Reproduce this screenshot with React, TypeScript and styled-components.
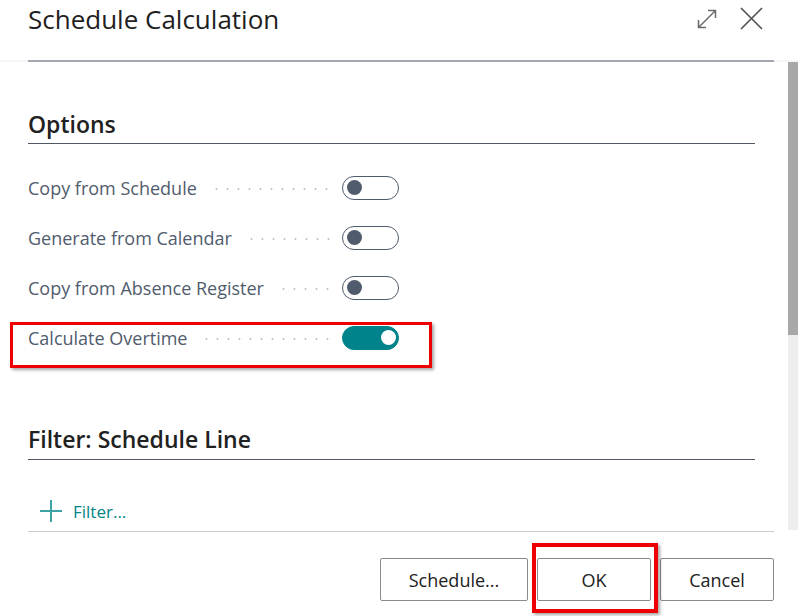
import React from "react";
import styled, { createGlobalStyle } from "styled-components";

const GlobalStyle = createGlobalStyle`
  html, body {
    margin: 0;
    padding: 0;
    background: #ffffff;
  }
  body {
    font-family: "Open Sans", "Noto Sans", sans-serif;
    color: #212121;
  }
`;

const options = [
  { label: "Copy from Schedule", on: false },
  { label: "Generate from Calendar", on: false },
  { label: "Copy from Absence Register", on: false },
  { label: "Calculate Overtime", on: true, marked: true },
];

const App = () => {
  return (
    <Dialog>
      <GlobalStyle />
      <HeaderBar>
        <Header>
          <Title>Schedule Calculation</Title>
          <HeaderIcons>
            <IconButton aria-label="Expand">
              <svg width="22" height="22" viewBox="0 0 22 22" fill="none">
                <path
                  d="M2.5 19.5 L19.5 2.5 M12 2.5 H19.5 V10 M2.5 12 V19.5 H10"
                  stroke="#6b6b6b"
                  strokeWidth="1.5"
                />
              </svg>
            </IconButton>
            <IconButton aria-label="Close">
              <svg width="23" height="23" viewBox="0 0 23 23" fill="none">
                <path d="M1 1 L22 22 M22 1 L1 22" stroke="#555555" strokeWidth="1.7" />
              </svg>
            </IconButton>
          </HeaderIcons>
        </Header>
      </HeaderBar>

      <Body>
        <Content>
          <Section>
            <SectionTitle>Options</SectionTitle>
            {options.map((opt) => (
              <FieldRow key={opt.label}>
                <FieldLabel>{opt.label}</FieldLabel>
                <Leader />
                <Toggle $on={opt.on}>
                  <Knob $on={opt.on} />
                </Toggle>
                {opt.marked && <RowMark />}
              </FieldRow>
            ))}
          </Section>

          <FilterSection>
            <SectionTitle>Filter: Schedule Line</SectionTitle>
            <FilterLink>
              <svg width="22" height="22" viewBox="0 0 22 22" fill="none">
                <path d="M0 11 H22 M11 0 V22" stroke="#3ea2a6" strokeWidth="2" />
              </svg>
              <span>Filter...</span>
            </FilterLink>
          </FilterSection>
        </Content>
        <ScrollTrack>
          <ScrollThumb />
        </ScrollTrack>
      </Body>

      <Footer>
        <ActionButton $wide>Schedule...</ActionButton>
        <Marked>
          <ActionButton>OK</ActionButton>
          <ButtonMark />
        </Marked>
        <ActionButton>Cancel</ActionButton>
      </Footer>
    </Dialog>
  );
};

export default App;

const Dialog = styled.div`
  width: 798px;
  height: 616px;
  display: flex;
  flex-direction: column;
  overflow: hidden;
  background: #ffffff;
`;

const HeaderBar = styled.div`
  border-bottom: 2px solid #f5f5f6;
  padding: 0 24px 0 28px;
`;

const Header = styled.div`
  height: 60px;
  display: flex;
  align-items: flex-start;
  justify-content: space-between;
  border-bottom: 2px solid #a3a7b2;
  margin-bottom: -2px;
`;

const Title = styled.h1`
  margin: 0;
  font-size: 26px;
  line-height: 38px;
  font-weight: 400;
  color: #1f1f1f;
`;

const HeaderIcons = styled.div`
  display: flex;
  align-items: center;
  gap: 22px;
  margin-top: 7px;
  margin-right: 11px;
`;

const IconButton = styled.span`
  display: flex;
  line-height: 0;
`;

const Body = styled.div`
  display: flex;
  height: 470px;
`;

const Content = styled.div`
  flex: 1;
  margin-left: 28px;
  border-bottom: 1px solid #cccccc;
  padding-right: 19px;
`;

const Section = styled.div`
  padding-top: 47px;
`;

const SectionTitle = styled.h2`
  margin: 0;
  font-size: 23px;
  line-height: 30px;
  font-weight: 600;
  color: #212121;
  padding-bottom: 4px;
  border-bottom: 1px solid #505868;
  margin-bottom: 19px;
`;

const FieldRow = styled.div`
  position: relative;
  height: 50px;
  width: 371px;
  display: flex;
  align-items: center;
`;

const FieldLabel = styled.span`
  font-size: 18px;
  color: #505c6d;
  white-space: nowrap;
`;

const Leader = styled.span`
  flex: 1;
  height: 2px;
  margin: 2px 10px 0 14px;
  background-image: radial-gradient(circle, #bfc3ca 0.9px, transparent 1.2px);
  background-size: 11px 2px;
  background-repeat: repeat-x;
`;

const Toggle = styled.span<{ $on: boolean }>`
  position: relative;
  flex: none;
  box-sizing: border-box;
  width: 57px;
  height: 24px;
  border-radius: 12px;
  border: 1px solid ${(p) => (p.$on ? "#00838a" : "#505c6d")};
  background: ${(p) => (p.$on ? "#00838a" : "#ffffff")};
`;

const Knob = styled.span<{ $on: boolean }>`
  position: absolute;
  top: 3px;
  left: ${(p) => (p.$on ? "38px" : "4px")};
  width: 15px;
  height: 15px;
  border-radius: 50%;
  background: ${(p) => (p.$on ? "#ffffff" : "#505c6d")};
`;

const RowMark = styled.span`
  position: absolute;
  left: -18px;
  top: 9px;
  width: 422px;
  height: 46px;
  box-sizing: border-box;
  border: 3px solid #ee0000;
  box-shadow: 2px 2px 3px rgba(0, 0, 0, 0.35);
  pointer-events: none;
`;

const FilterSection = styled.div`
  padding-top: 61px;

  ${SectionTitle} {
    padding-bottom: 5px;
    margin-bottom: 39px;
  }
`;

const FilterLink = styled.div`
  display: flex;
  align-items: center;
  gap: 11px;
  padding-left: 12px;
  height: 24px;
  font-size: 17px;
  color: #00858a;
`;

const ScrollTrack = styled.div`
  width: 10px;
  margin-left: 14px;
  height: 468px;
  background: #eeeeee;
`;

const ScrollThumb = styled.div`
  height: 273px;
  background: #a8a8a8;
`;

const Footer = styled.div`
  display: flex;
  justify-content: flex-end;
  gap: 9px;
  padding: 26px 24px 0 0;
`;

const Marked = styled.div`
  position: relative;
  display: flex;
`;

const ActionButton = styled.button<{ $wide?: boolean }>`
  box-sizing: border-box;
  width: ${(p) => (p.$wide ? "148px" : "114px")};
  height: 43px;
  background: #ffffff;
  border: 1px solid #8a8a8a;
  border-radius: 2px;
  font-family: "Open Sans", "Noto Sans", sans-serif;
  font-size: 18px;
  font-weight: 500;
  color: #212121;
  cursor: pointer;
`;

const ButtonMark = styled.span`
  position: absolute;
  left: -5px;
  top: -15px;
  right: -7px;
  bottom: -12px;
  border: 4px solid #ee0000;
  box-shadow: 2px 2px 3px rgba(0, 0, 0, 0.35);
  pointer-events: none;
`;
